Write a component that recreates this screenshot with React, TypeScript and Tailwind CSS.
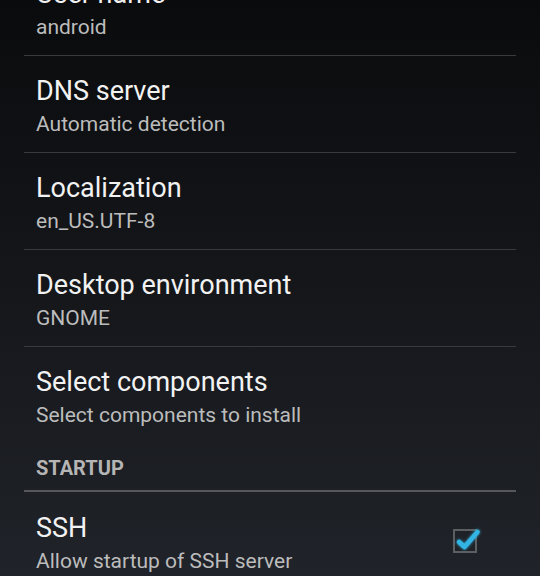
const rows = [
  { title: "User name", summary: "android" },
  { title: "DNS server", summary: "Automatic detection" },
  { title: "Localization", summary: "en_US.UTF-8" },
  { title: "Desktop environment", summary: "GNOME" },
  { title: "Select components", summary: "Select components to install" },
];

const CheckIcon = () => (
  <svg width="36" height="32" viewBox="0 0 36 32" className="block">
    <defs>
      <filter id="glow" x="-50%" y="-50%" width="200%" height="200%">
        <feGaussianBlur stdDeviation="1.5" result="b" />
        <feMerge>
          <feMergeNode in="b" />
          <feMergeNode in="SourceGraphic" />
        </feMerge>
      </filter>
    </defs>
    <rect x="5" y="5" width="22" height="22" fill="none" stroke="#5c5e62" strokeWidth="2" />
    <path
      d="M10 17 L15.5 22 L28.5 7"
      fill="none"
      stroke="#33b5e5"
      strokeWidth="4.5"
      strokeLinecap="round"
      strokeLinejoin="round"
      filter="url(#glow)"
    />
  </svg>
);

const Row = ({ title, summary, last }: { title: string; summary: string; last?: boolean }) => (
  <div className={`h-[97px] pt-[19px] pl-3 ${last ? "" : "border-b border-[#393a3d]"}`}>
    <p className="text-[27px] leading-[32px] text-[#f2f2f2]">{title}</p>
    <p className="mt-[4px] text-[21px] leading-[26px] text-[#bcbcbc]">{summary}</p>
  </div>
);

export default function App() {
  return (
    <div
      className="w-[540px] h-[576px] overflow-hidden bg-gradient-to-b from-[#0a0b0d] to-[#202329]"
      style={{ fontFamily: "Roboto, 'Noto Sans', sans-serif" }}
    >
      <div className="mt-[-41px] px-6">
        {rows.map((r, i) => (
          <Row key={r.title} title={r.title} summary={r.summary} last={i === rows.length - 1} />
        ))}
        <div className="h-[48px] flex items-end pl-3 pb-[10px] border-b-2 border-[#55575b]">
          <p className="text-[20px] leading-[24px] font-bold text-[#b5b5b5]">STARTUP</p>
        </div>
        <div className="h-[96px] flex items-start justify-between pl-3 pr-[31px]">
          <div className="pt-[20px]">
            <p className="text-[27px] leading-[32px] text-[#f2f2f2]">SSH</p>
            <p className="mt-[4px] text-[21px] leading-[26px] text-[#bcbcbc]">Allow startup of SSH server</p>
          </div>
          <div className="pt-[33px]">
            <CheckIcon />
          </div>
        </div>
      </div>
    </div>
  );
}
